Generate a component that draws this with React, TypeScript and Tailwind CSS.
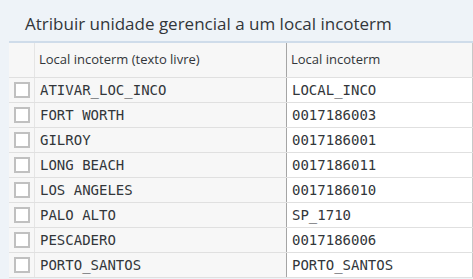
const rows = [
  ["ATIVAR_LOC_INCO", "LOCAL_INCO"],
  ["FORT WORTH", "0017186003"],
  ["GILROY", "0017186001"],
  ["LONG BEACH", "0017186011"],
  ["LOS ANGELES", "0017186010"],
  ["PALO ALTO", "SP_1710"],
  ["PESCADERO", "0017186006"],
  ["PORTO_SANTOS", "PORTO_SANTOS"],
];

export default function App() {
  return (
    <div className="w-[473px] h-[279px] overflow-hidden bg-[#eef3f8] text-[#32363a] font-['Open_Sans',sans-serif]">
      <div className="h-[41px] pl-[25px] pt-[14px] text-[17px] leading-[20px]">
        Atribuir unidade gerencial a um local incoterm
      </div>
      <div className="ml-[9px] w-[464px] border-t-2 border-[#cfdcea]">
        <div className="grid grid-cols-[26px_252px_186px] h-[35px] bg-[#f7f7f7] border-b border-[#e0e0e0] text-[13px]">
          <div className="border-r border-[#e5e5e5]" />
          <div className="border-r border-[#a5a5a5] flex items-center pl-[4px]">
            Local incoterm (texto livre)
          </div>
          <div className="border-r border-[#c8c8c8] flex items-center pl-[4px]">Local incoterm</div>
        </div>
        {rows.map(([a, b]) => (
          <div
            key={a}
            className="grid grid-cols-[26px_252px_186px] h-[25px] border-b border-[#e0e0e0] font-['DejaVu_Sans_Mono',monospace] text-[14px]"
          >
            <div className="bg-[#f7f7f7] border-r border-[#e5e5e5] flex items-center pl-[5px]">
              <div className="w-[16px] h-[16px] border-2 border-[#c0c0c0] bg-white" />
            </div>
            <div className="bg-[#f7f7f7] border-r border-[#a5a5a5] flex items-center pl-[5px]">{a}</div>
            <div className="bg-white border-r border-[#c8c8c8] flex items-center pl-[5px]">{b}</div>
          </div>
        ))}
      </div>
    </div>
  );
}
